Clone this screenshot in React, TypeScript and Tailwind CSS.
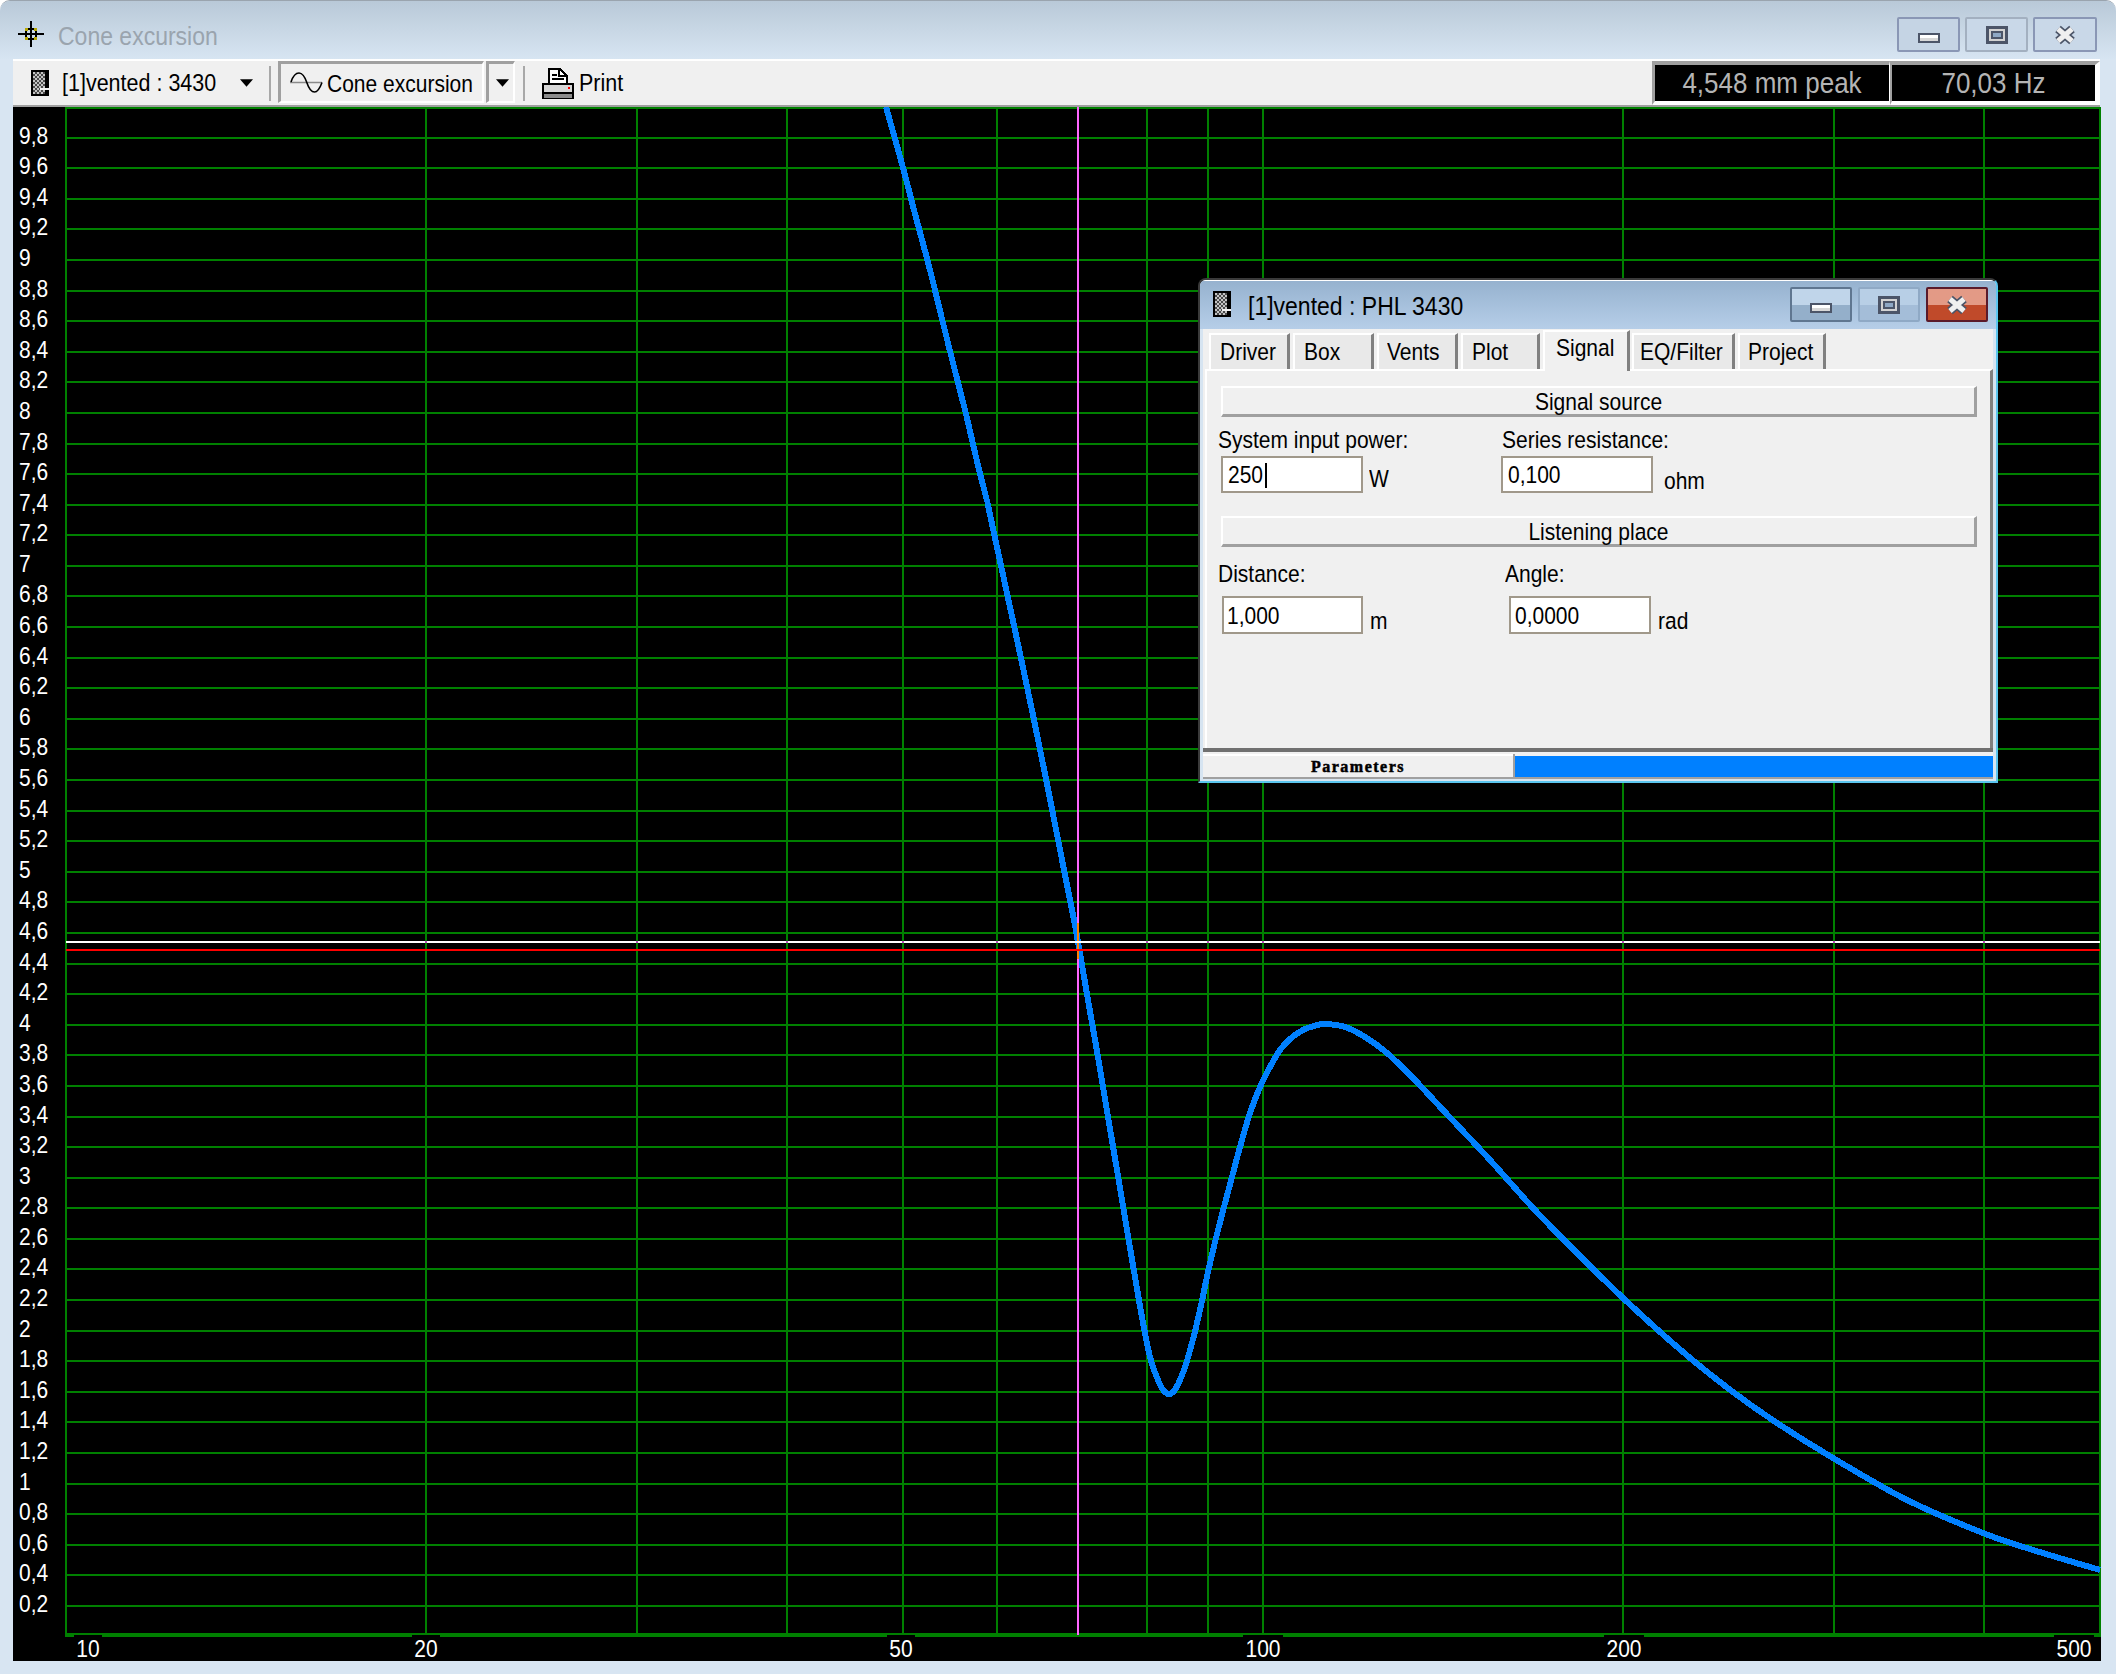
import type { ReactNode } from 'react';

const curve: [number, number][] = [
  [886, 107], [902, 164], [914, 210], [930, 270], [944, 327], [954, 367], [966, 414], [976, 457],
  [986, 497], [992, 524], [1033, 715], [1070, 900], [1078, 942], [1088, 1000], [1098, 1057],
  [1108, 1117], [1117.500, 1173], [1127, 1230], [1135, 1277], [1142.500, 1320], [1150, 1357], [1158, 1380],
  [1164, 1391], [1170, 1394], [1176, 1388], [1184, 1370], [1192, 1343], [1200, 1310], [1208, 1272],
  [1216, 1238], [1224, 1207], [1232, 1177], [1240, 1147], [1250, 1113], [1260, 1087], [1270, 1067],
  [1280, 1050], [1290, 1039], [1303, 1030], [1314, 1026], [1325, 1024], [1345, 1027], [1365, 1037], [1387, 1053],
  [1413, 1078], [1443, 1110], [1490, 1160], [1533, 1208], [1572, 1248], [1623, 1298], [1683, 1352],
  [1733, 1392], [1777, 1423], [1833, 1458], [1907, 1500], [1983, 1533], [2033, 1550], [2100, 1570],
];

// catmull-rom through the traced points
function smoothPath(pts: [number, number][]) {
  let d = `M${pts[0][0]} ${pts[0][1]}`;
  for (let i = 0; i < pts.length - 1; i++) {
    const p0 = pts[Math.max(i - 1, 0)];
    const p1 = pts[i];
    const p2 = pts[i + 1];
    const p3 = pts[Math.min(i + 2, pts.length - 1)];
    const c1x = p1[0] + (p2[0] - p0[0]) / 6;
    const c1y = p1[1] + (p2[1] - p0[1]) / 6;
    const c2x = p2[0] - (p3[0] - p1[0]) / 6;
    const c2y = p2[1] - (p3[1] - p1[1]) / 6;
    d += ` C${c1x} ${c1y} ${c2x} ${c2y} ${p2[0]} ${p2[1]}`;
  }
  return d;
}

const yOf = (v: number) => Math.round(1636.6 - 152.96 * v);
const xOf = (f: number) => Math.round(66 + 1197 * Math.log10(f / 10));

const yTicks = Array.from({ length: 49 }, (_, i) => (i + 1) / 5);
const xGrid = [20, 30, 40, 50, 60, 80, 90, 100, 200, 300, 400];
const xLabels = [
  { text: '10', cx: 88 },
  { text: '20', cx: 426 },
  { text: '50', cx: 901 },
  { text: '100', cx: 1263 },
  { text: '200', cx: 1624 },
  { text: '500', cx: 2074 },
];

function Plot() {
  return (
    <svg className="h-full w-full" viewBox="13 107 2088 1554">
      <g fill="#008000" shapeRendering="crispEdges">
        {yTicks.map((v) => (
          <rect key={v} x={66} y={yOf(v) - 1} width={2034} height={2} />
        ))}
        {xGrid.map((f) => (
          <rect key={f} x={xOf(f) - 1} y={107} width={2} height={1528} />
        ))}
        <rect x={65} y={107} width={2036} height={2} />
        <rect x={65} y={107} width={2} height={1530} />
        <rect x={2099} y={107} width={2} height={1530} />
        <rect x={65} y={1633} width={2036} height={4} />
      </g>

      <path d={smoothPath(curve)} fill="none" stroke="#0080ff" strokeWidth={6} shapeRendering="crispEdges" />

      <g shapeRendering="crispEdges">
        <rect x={1077} y={107} width={2} height={1528} fill="#ff66ff" />
        <rect x={1077} y={923} width={2} height={36} fill="#ff8000" />
        <rect x={66} y={941} width={2034} height={2} fill="#ffffff" />
        <rect x={66} y={949} width={2034} height={2} fill="#ff0000" />
        {xGrid.map((f) => (
          <rect key={f} x={xOf(f) - 1} y={941} width={2} height={2} fill="#bb44bb" />
        ))}
      </g>

      <g fill="#ffffff" fontSize={21}>
        {yTicks.map((v) => (
          <text key={v} transform={`translate(19 ${yOf(v) + 6}) scale(1 1.15)`}>
            {String(v).replace('.', ',')}
          </text>
        ))}
        {xLabels.map((l) => (
          <g key={l.text}>
            <rect x={l.cx - l.text.length * 6 - 2} y={1635} width={l.text.length * 12 + 4} height={25} fill="#000000" shapeRendering="crispEdges" />
            <text transform={`translate(${l.cx} 1657) scale(1 1.15)`} textAnchor="middle">
              {l.text}
            </text>
          </g>
        ))}
      </g>
    </svg>
  );
}

// the captured app text is taller than Liberation at the same width
function Tall({ children }: { children: ReactNode }) {
  return <span className="inline-block scale-y-[1.15] whitespace-nowrap">{children}</span>;
}

function SpeakerIcon() {
  return (
    <svg width="18" height="26" viewBox="0 0 18 26" shapeRendering="crispEdges">
      <defs>
        <pattern id="spk" width="4" height="4" patternUnits="userSpaceOnUse">
          <rect width="4" height="4" fill="#4a4a4a" />
          <rect width="2" height="2" fill="#c4c4c4" />
          <rect x="2" y="2" width="2" height="2" fill="#c4c4c4" />
        </pattern>
      </defs>
      <rect width="18" height="26" fill="#000000" />
      <rect x="2" y="2" width="12" height="22" fill="url(#spk)" />
      <rect x="9" y="18" width="9" height="2" fill="#f0f0f0" />
    </svg>
  );
}

function CrossIcon() {
  return (
    <svg width="26" height="26" viewBox="0 0 26 26" shapeRendering="crispEdges">
      <rect x="0" y="12" width="26" height="2" fill="#000000" />
      <rect x="12" y="0" width="2" height="26" fill="#000000" />
      <rect x="8" y="8" width="10" height="10" fill="none" stroke="#000000" strokeWidth="2" />
      <rect x="7" y="7" width="3" height="3" fill="#b8a800" />
      <rect x="16" y="7" width="3" height="3" fill="#b8a800" />
      <rect x="7" y="16" width="3" height="3" fill="#b8a800" />
      <rect x="16" y="16" width="3" height="3" fill="#b8a800" />
    </svg>
  );
}

function WaveIcon() {
  return (
    <svg width="33" height="22" viewBox="0 0 33 22" fill="none">
      <path d="M0 10.500H32" stroke="#8a8a8a" strokeWidth="1.500" />
      <path d="M1 10C3 4 6 1 9 1C12 1 15 5 17 11C19 17 21 20 24.500 20C28 20 30 16 32 10.500" stroke="#000000" strokeWidth="1.600" />
    </svg>
  );
}

function PrinterIcon() {
  return (
    <svg width="32" height="31" viewBox="0 0 32 31" shapeRendering="crispEdges">
      <path d="M7 1H18L25 8V17H7Z" fill="#ffffff" stroke="#000000" strokeWidth="2" />
      <path d="M17 1V8H25" fill="none" stroke="#000000" strokeWidth="1.500" />
      <rect x="10" y="6" width="5" height="2" fill="#000000" />
      <rect x="10" y="10" width="12" height="2" fill="#000000" />
      <rect x="1" y="16" width="30" height="14" fill="#d8d8d8" stroke="#000000" strokeWidth="2" />
      <rect x="2" y="24" width="28" height="1.500" fill="#000000" />
      <rect x="2" y="25.500" width="28" height="4" fill="#8c8c8c" />
      <rect x="26" y="19" width="2" height="2" fill="#ff0000" />
    </svg>
  );
}

function DropArrow() {
  return (
    <svg width="13" height="8" viewBox="0 0 14 8">
      <path d="M0 0H14L7 8Z" fill="#000000" />
    </svg>
  );
}

function MinGlyph() {
  return (
    <svg className="mt-[7px]" width="22" height="10" viewBox="0 0 22 10" shapeRendering="crispEdges">
      <rect x="1" y="1" width="20" height="8" fill="#d8d8d8" stroke="#4c5568" strokeWidth="2" />
      <rect x="2" y="2" width="18" height="3" fill="#ffffff" />
    </svg>
  );
}

function MaxGlyph() {
  return (
    <svg width="22" height="18" viewBox="0 0 22 18" shapeRendering="crispEdges">
      <rect x="1.500" y="1.500" width="19" height="15" fill="#d2d2d2" stroke="#4c5568" strokeWidth="3" />
      <rect x="6" y="6" width="10" height="6" fill="#8fa8c4" stroke="#4c5568" strokeWidth="2" />
    </svg>
  );
}

function CloseGlyph() {
  return (
    <svg width="24" height="20" viewBox="0 0 24 20">
      <path d="M5 4L19 16M19 4L5 16" stroke="#4c5568" strokeWidth="8.500" />
      <path d="M5 4L19 16M19 4L5 16" stroke="#f0f0f0" strokeWidth="5" />
    </svg>
  );
}

function WinButton({ className, children }: { className: string; children: ReactNode }) {
  return <div className={`flex h-[35px] items-center justify-center rounded-[2px] border-2 ${className}`}>{children}</div>;
}

function ReadoutCell({ className, children }: { className: string; children: ReactNode }) {
  return (
    <div className={`flex h-[44px] items-center justify-center border-t-4 border-b-4 border-t-[#a0a0a0] border-b-white bg-black text-[26px] text-[#b4b4b4] ${className}`}>
      <Tall>{children}</Tall>
    </div>
  );
}

function ToolSep({ className }: { className: string }) {
  return <div className={`h-[35px] w-[2px] bg-[#a8a8a8] ${className}`} />;
}

function SectionHeader({ className, children }: { className: string; children: ReactNode }) {
  return (
    <div className={`ml-[14px] flex h-[31px] w-[756px] items-center justify-center border-t-2 border-r-[3px] border-b-[3px] border-l-2 border-t-white border-r-[#a0a0a0] border-b-[#a0a0a0] border-l-white pt-[2px] text-[21px] ${className}`}>
      <Tall>{children}</Tall>
    </div>
  );
}

function Field({
  label,
  value,
  unit,
  className,
  labelClass,
  inputClass,
  unitClass,
  caret,
}: {
  label: string;
  value: string;
  unit: string;
  className: string;
  labelClass: string;
  inputClass: string;
  unitClass: string;
  caret?: boolean;
}) {
  return (
    <div className={`flex flex-col text-[21px] leading-[24px] ${className}`}>
      <div className={labelClass}>
        <Tall>{label}</Tall>
      </div>
      <div className="flex items-start">
        <div className={`flex items-center border-2 border-[#a0988a] bg-white pt-[1px] ${inputClass}`}>
          <Tall>{value}</Tall>
          {caret && <span className="ml-[2px] h-[25px] w-[2px] bg-black" />}
        </div>
        <div className={unitClass}>
          <Tall>{unit}</Tall>
        </div>
      </div>
    </div>
  );
}

function Tab({ className, children }: { className: string; children: ReactNode }) {
  return (
    <div className={`h-[36px] border-t-2 border-r-[3px] border-l-2 border-t-white border-r-[#808080] border-l-white bg-[#e9e9e9] text-[21px] leading-[34px] ${className}`}>
      <Tall>{children}</Tall>
    </div>
  );
}

function ParamsDialog() {
  return (
    <div className="absolute top-[171px] left-[1185px] flex h-[505px] w-[800px] flex-col overflow-hidden rounded-t-[8px] border-t-2 border-r-2 border-b-2 border-l-2 border-t-[#3a3a3a] border-r-[#5bc5ee] border-b-[#5bc5ee] border-l-[#3a3a3a] bg-[#d6e4f1]">
      <div className="flex h-[49px] shrink-0 border-t border-white bg-gradient-to-b from-[#96b2cf] to-[#b6cee8] pr-[8px] pl-[13px]">
        <div className="mt-[10px]">
          <SpeakerIcon />
        </div>
        <div className="mt-[11px] ml-[17px] text-[23px] leading-[28px] text-black">
          <Tall>[1]vented : PHL 3430</Tall>
        </div>
        <div className="mt-[6px] ml-auto flex gap-[6px]">
          <WinButton className="w-[62px] border-[#5f7690] bg-gradient-to-b from-[#c0d5ea] from-50% to-[#94afca] to-50%">
            <MinGlyph />
          </WinButton>
          <WinButton className="w-[62px] border-[#8fa9c5] bg-gradient-to-b from-[#b8cfe6] from-50% to-[#a4bdd8] to-50%">
            <MaxGlyph />
          </WinButton>
          <WinButton className="w-[62px] border-[#5a1a2a] bg-gradient-to-b from-[#e39a86] from-50% to-[#c04a2a] to-50%">
            <CloseGlyph />
          </WinButton>
        </div>
      </div>

      <div className="mr-[3px] ml-[3px] flex min-h-0 flex-1 flex-col bg-[#f0f0f0]">
        <div className="relative z-10 -mb-[2px] flex h-[42px] shrink-0 items-end pb-[2px] pl-[6px]">
          <Tab className="w-[81px] pl-[9px]">Driver</Tab>
          <Tab className="ml-[3px] w-[81px] pl-[9px]">Box</Tab>
          <Tab className="ml-[3px] w-[81px] pl-[8px]">Vents</Tab>
          <Tab className="ml-[3px] w-[79px] pl-[9px]">Plot</Tab>
          <div className="-mb-[2px] ml-[3px] h-[41px] w-[87px] border-t-2 border-r-[3px] border-l-2 border-t-white border-r-[#808080] border-l-white bg-[#f0f0f0] pl-[11px] text-[21px] leading-[32px]">
            <Tall>Signal</Tall>
          </div>
          <Tab className="ml-[2px] w-[103px] pl-[6px]">EQ/Filter</Tab>
          <Tab className="ml-[3px] w-[88px] pl-[8px]">Project</Tab>
        </div>

        <div className="ml-[2px] h-[379px] w-[788px] shrink-0 border-t-2 border-r-[3px] border-l-2 border-t-white border-r-[#808080] border-l-white pt-[15px]">
          <SectionHeader className="">Signal source</SectionHeader>
          <div className="mt-[11px] flex">
            <Field
              className="ml-[11px] w-[285px]"
              labelClass="mb-[4px]"
              label="System input power:"
              value="250"
              unit="W"
              caret
              inputClass="ml-[3px] h-[37px] w-[142px] pl-[5px]"
              unitClass="mt-[11px] ml-[6px]"
            />
            <Field
              className=""
              labelClass="mb-[4px] -ml-[1px]"
              label="Series resistance:"
              value="0,100"
              unit="ohm"
              inputClass="-ml-[2px] h-[37px] w-[152px] pl-[5px]"
              unitClass="mt-[13px] ml-[11px]"
            />
          </div>
          <SectionHeader className="mt-[23px]">Listening place</SectionHeader>
          <div className="mt-[15px] flex">
            <Field
              className="ml-[11px] w-[287px]"
              labelClass="mb-[10px]"
              label="Distance:"
              value="1,000"
              unit="m"
              inputClass="ml-[4px] h-[38px] w-[141px] pl-[3px]"
              unitClass="mt-[13px] ml-[7px]"
            />
            <Field
              className=""
              labelClass="mb-[10px]"
              label="Angle:"
              value="0,0000"
              unit="rad"
              inputClass="ml-[4px] h-[38px] w-[142px] pl-[4px]"
              unitClass="mt-[13px] ml-[7px]"
            />
          </div>
        </div>

        <div className="h-[4px] w-full shrink-0 bg-[#707070]" />
        <div className="mt-[2px] flex h-[25px] w-full shrink-0 border-b-2 border-[#a0a0a0]">
          <div className="flex w-[310px] items-center justify-center border-t-2 border-white font-['Liberation_Serif',serif] text-[16px] font-bold tracking-[1.5px] [-webkit-text-stroke:0.5px_#000]">
            Parameters
          </div>
          <div className="w-[2px] bg-[#a0a0a0]" />
          <div className="mt-[2px] flex-1 bg-[#0080ff]" />
        </div>
        <div className="flex-1 bg-[#d8e5f0]" />
      </div>
    </div>
  );
}

export default function App() {
  return (
    <div className="h-[1674px] w-[2116px] overflow-hidden bg-white font-['Liberation_Sans',Arial,sans-serif] text-black">
      <div className="flex h-full flex-col rounded-t-[10px] border-t border-[#9aa4ae] bg-[#d8e5f2]">
        <div className="flex h-[58px] shrink-0 rounded-t-[10px] bg-gradient-to-b from-[#b9c9d8] to-[#d7e5f2] pr-[19px] pl-[18px]">
          <div className="mt-[20px]">
            <CrossIcon />
          </div>
          <div className="mt-[21px] ml-[14px] text-[23px] leading-[28px] text-[#9aa4ae]">
            <Tall>Cone excursion</Tall>
          </div>
          <div className="mt-[16px] ml-auto flex gap-[5px]">
            <WinButton className="w-[63px] border-[#8a97b5] bg-[#c5d4e4]">
              <MinGlyph />
            </WinButton>
            <WinButton className="w-[63px] border-[#a3b0c0] bg-[#c9d8e8]">
              <MaxGlyph />
            </WinButton>
            <WinButton className="w-[64px] border-[#8a97b5] bg-[#c9d8e8]">
              <CloseGlyph />
            </WinButton>
          </div>
        </div>

        <div className="ml-[13px] flex h-[48px] w-[2087px] shrink-0 items-center border-t-2 border-b-2 border-t-white border-b-[#a0a0a0] bg-[#f0f0f0] text-[21.5px]">
          <div className="ml-[18px]">
            <SpeakerIcon />
          </div>
          <div className="ml-[13px] w-[165px]">
            <Tall>[1]vented : 3430</Tall>
          </div>
          <div className="ml-[13px]">
            <DropArrow />
          </div>
          <ToolSep className="ml-[16px]" />
          <div className="ml-[7px] flex h-[42px] w-[206px] items-center self-start border-t-[3px] border-r-2 border-b-2 border-l-[3px] border-t-[#a0a0a0] border-r-white border-b-white border-l-[#a0a0a0] pl-[9px]">
            <WaveIcon />
            <div className="ml-[4px] pt-[3px] text-[21px]">
              <Tall>Cone excursion</Tall>
            </div>
          </div>
          <div className="ml-[2px] flex h-[42px] w-[29px] items-center justify-center self-start border-t-[3px] border-r-2 border-b-2 border-l-[3px] border-t-[#a0a0a0] border-r-white border-b-white border-l-[#a0a0a0] pl-[3px]">
            <DropArrow />
          </div>
          <ToolSep className="ml-[8px]" />
          <div className="ml-[17px]">
            <PrinterIcon />
          </div>
          <div className="ml-[5px]">
            <Tall>Print</Tall>
          </div>

          <div className="ml-auto flex self-start">
            <ReadoutCell className="w-[238px] border-r border-l-[3px] border-r-white border-l-[#a0a0a0]">4,548 mm peak</ReadoutCell>
            <ReadoutCell className="w-[210px] border-r-[5px] border-l-2 border-r-white border-l-[#a0a0a0]">70,03 Hz</ReadoutCell>
          </div>
        </div>

        <div className="relative ml-[13px] h-[1554px] w-[2088px] shrink-0 bg-black">
          <Plot />
          <ParamsDialog />
        </div>
      </div>
    </div>
  );
}
